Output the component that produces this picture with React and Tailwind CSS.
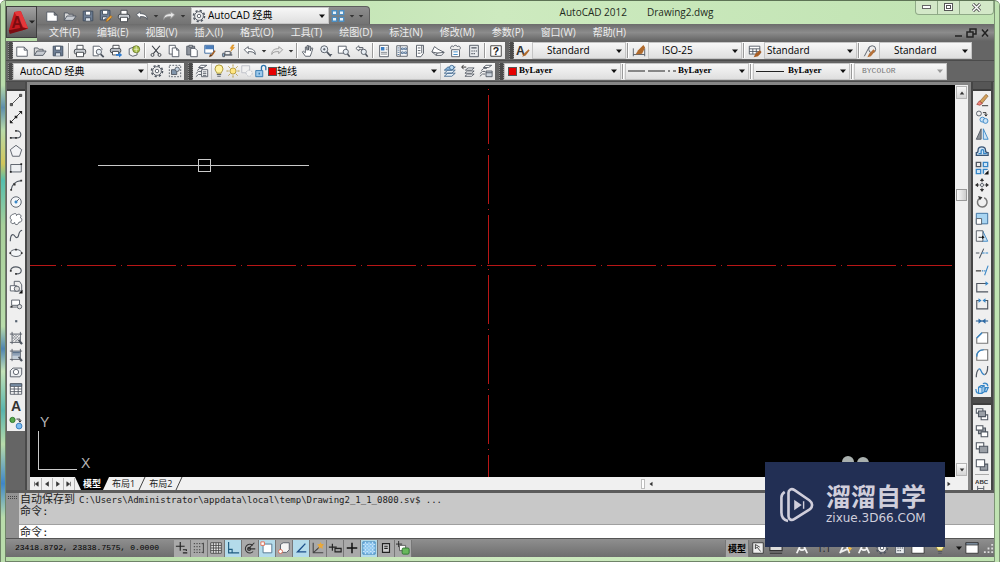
import React, { useState } from 'react';

const G = '#4f5660';
const B = '#3585c6';
const L = '#cfe4f5';

const icons = {
  blank: <path d="M2 3.5h8.5l3.5 3.5v7H2zM10.5 3.5V7H14" fill="#fff" stroke={G} />,
  open: (
    <g stroke={G}>
      <path d="M1.5 13V4.5h4l1 1.5h5v2" fill="#d9d9d9" />
      <path d="M1.5 13l3-5h10.500l-3.500 5z" fill="#c8ccd2" />
    </g>
  ),
  save: (
    <g stroke="#3d4a5c">
      <path d="M2.500 2.500h11v11h-11z" fill="#6f7f96" />
      <path d="M5 2.500h6v4.500H5z" fill="#fff" />
      <path d="M5 13.500V10h6v3.500" fill="#dde3ea" />
    </g>
  ),
  saveAs: (
    <g stroke="#3d4a5c">
      <path d="M1.500 1.500h11v11h-11z" fill="#6f7f96" />
      <path d="M4 1.500h6V6H4zM4 12.500V9h5" fill="#fff" />
      <path d="M8 14.500l1-3 4.500-4 1.500 1.500-4.500 4.500z" fill="#e9a43c" stroke="#a06010" strokeWidth=".6" />
    </g>
  ),
  print: (
    <g stroke="#3c4046">
      <path d="M4.500 6V1.500h7V6" fill="#fff" />
      <rect x="1.500" y="6" width="13" height="5.500" rx="2" fill="#c9cdd2" />
      <path d="M4 9.500h8v5H4z" fill="#fff" />
    </g>
  ),
  preview: (
    <g stroke={G}>
      <path d="M9 13.500H2.500v-11h7l3 3V7" fill="#fff" />
      <circle cx="9" cy="9" r="3" fill="#e8eef4" />
      <path d="M11 11.500l3.500 3.500" strokeWidth="2" />
    </g>
  ),
  publish: (
    <g stroke="#3c4046">
      <path d="M4.500 5V1.500h7V5" fill="#fff" />
      <rect x="1.500" y="5" width="12" height="5" rx="2" fill="#b8bdc4" />
      <path d="M4 8.500h7v4H4z" fill="#fff" />
      <path d="M8 11.500h3.500v-2L15 12.500l-3.500 3v-2H8z" fill="#2f7cd0" stroke="none" />
    </g>
  ),
  globe: (
    <g stroke={G}>
      <path d="M2.500 5.500l5-2 4 2v7l-5 1.500-4-2z" fill="#f2f2f2" />
      <circle cx="10.500" cy="6" r="4" fill="#a9c24a" stroke="#6a7a2a" />
      <path d="M8 6h5M10.500 2.500v7" stroke="#f5f5e0" strokeWidth=".8" />
    </g>
  ),
  cut: (
    <g stroke="#3a3f46">
      <path d="M3.500 2L11 11M12.500 2L5 11" strokeWidth="1.300" />
      <circle cx="4" cy="12.500" r="1.700" />
      <circle cx="12" cy="12.500" r="1.700" />
    </g>
  ),
  copyClip: (
    <g stroke={G} fill="#fff">
      <path d="M2.500 1.500h7v10h-7z" />
      <path d="M6 4.500h5l2.500 2.500v7.500H6zM11 4.500V7h2.500" />
    </g>
  ),
  paste: (
    <g stroke={G}>
      <path d="M2 2.500h9v10H2z" fill="#8d939c" />
      <path d="M4.500 1.500h4v2h-4z" fill="#ddd" />
      <path d="M6.500 5h5l2.500 2.500v7H6.500z" fill="#fff" />
    </g>
  ),
  match: (
    <g>
      <path d="M2 1.500h10v9H2z" fill="#fff" stroke="#2e5f99" />
      <path d="M2.500 2h9v4h-9z" fill="#4d80bd" />
      <path d="M9 12l4-5 1.500 1-3.500 5z" fill="#a3632b" />
      <path d="M7 15l1-3.500 3 2z" fill="#633512" />
    </g>
  ),
  block: (
    <g stroke={G}>
      <path d="M4.500 8.500h6v4h-6zM1 12.500h12" fill="#eee" />
      <path d="M11.500 13.500V9" />
      <path d="M13 1l-2.500 4h2L11 8.500 15.500 4H13l2-3z" fill="#f2a328" stroke="#c87c10" strokeWidth=".5" />
      <path d="M2 10.500h2v4H2z" fill="#9cbfe0" />
    </g>
  ),
  undo: <path d="M1.500 6.500L6 3v2.300c5 0 8 1.700 8 6.700-1-2.500-3.500-3.500-8-3.300V11z" fill="#fff" stroke={G} />,
  redo: <path d="M14.500 6.500L10 3v2.300c-5 0-8 1.700-8 6.700 1-2.500 3.500-3.500 8-3.300V11z" fill="#e6e6e6" stroke="#989898" />,
  hand: <path d="M5 14L1.500 9l1.300-.7L5 10V3.500l1.300-.3.700 4V1.700h1.500V7l1-4.700 1.300.3L10.500 8l1.700-3.700 1.300.6L12 10l-1.500 4z" fill="#fff" stroke={G} />,
  zoom: (
    <g stroke={G}>
      <circle cx="6" cy="6" r="4" fill="#e8eef4" />
      <path d="M9 9l4.500 5" strokeWidth="2" />
      <path d="M4.500 6h3M6 4.500v3M11 12h4" />
    </g>
  ),
  zoomWin: (
    <g stroke={G}>
      <path d="M1.500 2.500h9v8h-9z" fill="#fff" />
      <circle cx="10" cy="9" r="3" fill="#e8eef4" />
      <path d="M12 11.500l2.500 3" strokeWidth="1.800" />
    </g>
  ),
  zoomPrev: (
    <g stroke={G}>
      <path d="M1 5l3.500-3v2H9v2H4.500v2z" fill="#fff" />
      <circle cx="10" cy="9" r="3" fill="#e8eef4" />
      <path d="M12 11.500l2.500 3" strokeWidth="1.800" />
    </g>
  ),
  props: (
    <g stroke={G}>
      <path d="M3 1.500h10v13H3z" fill="#fff" />
      <path d="M4.500 3.500h4v4h-4z" fill="#3d7fc4" stroke="none" />
      <path d="M10 4.500h2M10 6.500h2M4.500 9.500h7M4.500 11.500h7" strokeWidth=".8" />
    </g>
  ),
  center: (
    <g stroke={G}>
      <path d="M2 2h12v12H2zM6 2v12" fill="#fff" />
      <path d="M3 4.500h2M3 7h2M3 9.500h2M3 12h2M7.500 4.500h2v2h-2zM11 4.500h2v2h-2zM7.500 9h2v2h-2zM11 9h2v2h-2z" stroke="#47688f" />
    </g>
  ),
  palette: (
    <g stroke={G}>
      <path d="M4 1.500h8v9l-3 4H4zM10 1.500v9" fill="#fff" />
      <path d="M5.500 4.500h3M5.500 7.500h3M5.500 10.500h3" />
    </g>
  ),
  sheet: (
    <g stroke={G}>
      <path d="M1 9l3-6 4 3 7 3.500-3 3.500H6z" fill="#fff" />
      <path d="M1 9l6 1.500 8-1M6 13l1-2.500" fill="#ccc" />
    </g>
  ),
  markup: (
    <g stroke={G}>
      <path d="M3 6.500h9v8H3z" fill="#fff" />
      <path d="M2 5.500c-1-3 2-4 3-2.500C6 1 9 1 9.500 3c2-1.500 4.500.5 3 3" fill="#eee" />
      <path d="M5 9h5M5 12h5" stroke={B} />
    </g>
  ),
  calc: (
    <g stroke={G}>
      <path d="M3 1.500h10v13H3z" fill="#e9ebee" />
      <path d="M5 4.500h6M5 8h1.500M7.500 8H9M10 8h1.500M5 11h1.500M7.500 11H9" strokeWidth="1.400" />
    </g>
  ),
  help: (
    <g>
      <path d="M2 2h12v12H2z" fill="#fff" stroke="#333" />
      <text x="8" y="12.500" textAnchor="middle" fontSize="12" fontWeight="700" fontFamily="Liberation Sans, sans-serif" fill="#222">?</text>
    </g>
  ),
  textStyle: (
    <g>
      <text x="0" y="12" fontSize="14" fontWeight="700" fontFamily="Liberation Sans, sans-serif" fill="#333">A</text>
      <path d="M7 14.500l2-3.500 5.500-5 1 1.500-4.500 5.500z" fill="#b06a2c" />
    </g>
  ),
  dimStyle: (
    <g>
      <path d="M1.500 5v9M14.500 5v9M1.500 12h13" stroke={G} />
      <path d="M4 12l3-5 6-6 2 3-3.500 7z" fill="#b06a2c" />
    </g>
  ),
  tableStyle: (
    <g>
      <path d="M1.500 2.500h12v9h-12zM1.500 5.500h12M5.500 5.500v6M9.500 5.500v6M1.500 8.500h12" fill="#fff" stroke={G} />
      <path d="M6.500 15l2-4 5-4 2 2-4 5z" fill="#a85e25" />
    </g>
  ),
  leaderStyle: (
    <g>
      <path d="M1.500 14L7 3.500h4" stroke={G} />
      <circle cx="10.500" cy="6" r="4" stroke={G} fill="#eee" />
      <path d="M5 15l2-4 5-5 2 2-5 6z" fill="#b5713a" />
    </g>
  ),
  gear: (
    <g stroke={G}>
      <circle cx="8" cy="8" r="5" fill="#eee" />
      <circle cx="8" cy="8" r="6.300" strokeWidth="1.800" strokeDasharray="2.500 2.450" />
      <circle cx="8" cy="8" r="2" fill="#fff" />
    </g>
  ),
  select: (
    <g stroke={G}>
      <path d="M1.500 1.500h13v13h-13z" strokeDasharray="2 1.500" />
      <path d="M4 6.500h6V12H4z" fill="#8195ab" />
      <circle cx="10.500" cy="6" r="2.500" fill="#c6d3e0" />
    </g>
  ),
  layers: (
    <g stroke={G}>
      <path d="M4 4l3-2.500h6.500L10 4zM2.500 7.500l3-2.500H9M1 11l3-2.500h3M1 14.500l3-2.500h3" fill="#fff" />
      <path d="M7.500 6.500h7v8h-7zM9 9h4M9 11h4M9 13h4" fill="#fff" />
    </g>
  ),
  bulb: (
    <g>
      <path d="M5.500 10.500c0-1.500-2-2.500-2-5a4.500 4.500 0 019 0c0 2.500-2 3.500-2 5z" fill="#fff3a0" stroke="#a08a28" />
      <path d="M5.500 12h5M6 14h4" stroke={G} />
    </g>
  ),
  sun: (
    <g stroke="#b09430">
      <circle cx="8" cy="8" r="3.500" fill="#ffe680" />
      <path d="M8 .5V3M8 13v2.500M.5 8H3M13 8h2.500M2.700 2.700l1.700 1.700M11.600 11.600l1.700 1.700M2.700 13.300l1.700-1.700M11.600 4.400l1.700-1.700" />
    </g>
  ),
  viewport: (
    <g stroke="#b9bdc3">
      <path d="M2 2h9v8H2z" fill="#f1f1f1" />
      <circle cx="10.500" cy="10.500" r="3.500" fill="#f3f3f3" strokeDasharray="2 1" />
    </g>
  ),
  lock: (
    <g stroke="#2d74ac">
      <path d="M2 7.500h8v7H2z" fill="#9cc9ec" />
      <path d="M8.500 7V4a2.500 2.500 0 015 0v3M6 10v2" strokeWidth="1.500" />
    </g>
  ),
  layerCur: (
    <g stroke="#42698f">
      <path d="M1.500 14l4-3.500H14L10 14zM1.500 10.500L5.500 7H14l-4 3.500z" fill="#e6f0f8" />
      <path d="M1.500 7l4-3.500H14L10 7z" fill="#86b4dc" />
      <circle cx="10" cy="4" r="2.500" fill="#bcdcf5" />
    </g>
  ),
  layerPrev: (
    <g stroke={G}>
      <path d="M4.500 14l3-2.500H15L12 14zM4.500 10.500l3-2.500H15l-3 2.500zM5 7l3-2.500h7L12 7z" fill="#fff" />
      <path d="M1 3.500h5M3 1L.8 3.500 3 6" stroke="#222" />
    </g>
  ),
  layerStates: (
    <g stroke={G}>
      <path d="M5 4l3-2.500h6.500L11 4zM2.500 7.500l3-2.500H9M1 11l3-2.500h3M1 14l3-2.500h3" fill="#fff" />
      <path d="M8 8h7v6.500H8zM8 10h7" fill="#cbd3dc" />
    </g>
  ),
  line: <g stroke="#444"><path d="M3 13L13 3" /><path d="M1.500 12h2.500v2.500H1.500zM12 1.500h2.500V4H12z" fill="#666" /></g>,
  xline: <g stroke="#222"><path d="M2 14L14 2" /><path d="M1 15v-4l4 4zM15 1v4l-4-4zM6.500 6.500h3v3h-3z" fill="#222" stroke="none" /></g>,
  pline: <g stroke={G} strokeWidth="1.300"><path d="M2 12.500h7c6 0 6-8 0-8" /><path d="M1 11.500h2v2H1zM7 11.500h2v2H7zM7 3.500h2v2H7z" fill="#333" stroke="none" /></g>,
  polygon: <path d="M8 1.500l6.500 5L12 14H4L1.500 6.500z" fill="#f2f3f5" stroke={G} />,
  rect: <g stroke={G}><path d="M2 4h12v8.500H2z" fill="#eef0f2" /><path d="M1 11.500h2v2H1zM13 2.500h2v2h-2z" fill="#222" stroke="none" /></g>,
  arc: <g stroke={G} strokeWidth="1.300"><path d="M2.500 13.500C3 8 7 3.500 14 3" /><path d="M1.500 12.500h2v2h-2zM5 6h2.500v2.500H5zM13 2h2v2h-2z" fill="#333" stroke="none" /></g>,
  circle: <g stroke={G}><circle cx="8" cy="8" r="6" fill="#f4f6f8" /><path d="M8 8l3.500-3.500" /><circle cx="8" cy="8" r="1.300" fill={B} stroke={B} /></g>,
  cloud: <path d="M5 2.500c2-1.500 4-.5 3.500 1.500 2-3 7-1 4.500 2.500 3 1 1.500 6-1.500 5-1 4-5.500 3.500-5 .5-2.500 3-6 0-3.500-3-3-1.500-1.500-6 2-6.500z" fill="#fff" stroke={G} />,
  spline: <path d="M1.500 14c0-8 3-9 5-6s4 2 4.500-1S12.500 2 15 1.500" stroke={G} strokeWidth="1.300" />,
  ellipse: <g stroke={G}><ellipse cx="8" cy="8" rx="6.500" ry="4" fill="#f4f6f8" /><path d="M7 3h2v2H7zM.5 7h2v2h-2zM13.500 7h2v2h-2z" fill="#333" stroke="none" /></g>,
  ellArc: <g stroke={G} strokeWidth="1.300"><path d="M2 9c-1-6 12-6 12-.5 0 3-3 4-5.500 4" /><path d="M7 11.500h2v2H7zM1 8h2v2H1z" fill="#333" stroke="none" /></g>,
  insert: <g stroke={G}><path d="M6 1.500h6l2.500 4v7H6z" fill="#eee" /><path d="M1.500 6.500h7v6h-7z" fill="#fff" /><circle cx="9" cy="10" r="3" fill="#ddd" /><path d="M15.500 11v4.500H11z" fill="#111" stroke="none" /></g>,
  mkBlock: <g stroke={G}><path d="M3 3.500h9v6H3zM1 11.500h8" fill="#fff" /><circle cx="12" cy="11" r="2.500" fill="#ddd" /><path d="M2 10h2v2H2z" fill="#333" stroke="none" /></g>,
  point: <path d="M7 7h2.500v2.500H7z" fill="#556270" />,
  hatch: <g stroke={G}><path d="M3.500 1v14M13 1v14M1 3.500h14M1 13h14" /><path d="M4 12l8-8M4 9l5-5M7 12.500L12.500 7M4 6l2-2M4 4l8 8.500M7 4l6 6M4 7l5 5" strokeWidth=".5" /><path d="M11 10l4 5" strokeWidth="2" /></g>,
  gradient: <g stroke={G}><path d="M3.500 1v14M13 1v14M1 3.500h14M1 13h14" /><path d="M4 4h8.500v2.500H4z" fill="#5d738d" stroke="none" /><path d="M4 6.500h8.500V9H4z" fill="#8fa2b8" stroke="none" /><path d="M4 9h8.500v3.500H4z" fill="#c3ced9" stroke="none" /><path d="M11 10l4 5" strokeWidth="2" /></g>,
  region: <g stroke={G}><path d="M1.500 13.500v-7l3-3h10v7l-2 3z" fill="#eceef0" /><circle cx="8" cy="8" r="3" fill="#fff" /></g>,
  table: <g stroke={G}><path d="M1.500 2h13v12h-13zM1.500 8h13M1.500 11h13M6 5v9M10.500 5v9" fill="#fff" /><path d="M1.500 2h13v3h-13z" fill="#7c93ac" /></g>,
  mtext: <text x="8" y="14" textAnchor="middle" fontSize="16" fontWeight="700" fontFamily="Liberation Sans, sans-serif" fill="#333">A</text>,
  addSel: <g><circle cx="4" cy="4.500" r="3" fill="#58a84c" stroke="#2c7028" /><circle cx="11.500" cy="11.500" r="3.300" fill="#7fbdf0" stroke="#2f75b8" /><path d="M8.500 3.500h4V6M11 5l1.500 2L14 5" stroke="#222" /></g>,
  erase: <g><path d="M5 10l7.500-8.500 2.500 2L8 12z" fill="#d3a05a" stroke="#80572a" strokeWidth=".7" /><path d="M2 13l3-4 3.500 3-3 2z" fill="#f0837a" stroke="#8a3028" strokeWidth=".7" /><path d="M8 14.500h7" stroke="#222" /></g>,
  copyObj: <g><circle cx="4.500" cy="4" r="2.800" stroke={G} fill="#eee" /><circle cx="8.500" cy="11" r="2.800" stroke={B} fill={L} /><circle cx="12" cy="12.500" r="2.800" stroke={B} fill={L} /><path d="M9 3h3.500v3.500M11 5l1.500 2L14 5" stroke="#222" /></g>,
  mirror: <g><path d="M7 2v12H1.500z" fill="#8b9096" stroke={G} /><path d="M9.500 2v12H15z" fill={L} stroke={B} /></g>,
  offset: <g><path d="M1.500 13V10c2 0 2-1 2-3 0-5 8.500-5 8.500 0 0 2 1 3 3 3v3z" stroke="#3a5575" strokeWidth="1.500" fill={L} /><path d="M4 11h3V8c0-2 3-2 3 0v3h3.500" stroke={B} strokeWidth="1.500" fill={L} /></g>,
  array: <g strokeWidth="1.500"><path d="M1.500 1.500h5v5h-5z" stroke={G} fill="#eee" /><path d="M9.500 1.500h5v5h-5zM1.500 9.500h5v5h-5zM9.500 14.500v-5h5" stroke={B} fill={L} /><path d="M15.500 10.500v5h-5z" fill="#111" /></g>,
  move: <g><circle cx="8" cy="8" r="1.800" stroke={G} /><path d="M8 0l2.500 3.500h-5zM8 16l-2.500-3.500h5zM0 8l3.500-2.500v5zM16 8l-3.500 2.500v-5z" fill="#333" /><path d="M8 3v2M8 11v2M3 8h2M11 8h2" stroke="#333" /></g>,
  rotate: <g stroke="#777" strokeWidth="1.700"><path d="M5.500 3.500a5.500 5.500 0 105-.3" /><path d="M3.500 1l5 1.500-3 3.500z" fill="#333" stroke="none" /></g>,
  scale: <g><path d="M1.500 1.500h13v12h-13z" fill="#a9d5f2" stroke="#35699a" /><path d="M1.500 7.500h6v6.500h-6z" fill="#fff" stroke={G} /></g>,
  stretch: <g><path d="M9 2.500l5.500 11.500H8z" fill={L} stroke={B} /><path d="M1.500 2H9v12H1.500z" fill="#f6f6f6" stroke={G} /><path d="M4 9.500h4" stroke="#111" /><path d="M8 7.500l3 2-3 2z" fill="#111" /></g>,
  trim: <g stroke={G} strokeWidth="1.200"><path d="M1 8h4M5 14L10 3" /><path d="M8 8h7" stroke={B} strokeDasharray="3 1" /></g>,
  extend: <g stroke={G} strokeWidth="1.200"><path d="M1 9h6" stroke="#222" /><path d="M8 9h4" stroke={B} strokeDasharray="1.500 1" /><path d="M11 14l4-11" stroke={B} /></g>,
  breakPt: <g stroke={G} strokeWidth="1.300"><path d="M13 4H2v9.500h13" /><path d="M12 1.500L15.500 4 12 6.500z" fill={B} stroke="none" /></g>,
  breakObj: <g stroke={G} strokeWidth="1.300"><path d="M5 4H2v9.500h12.500V4H11" fill="#eee" /><path d="M4 1.500L7.500 4 4 6.500zM12 1.500L8.500 4 12 6.500z" fill={B} stroke="none" /></g>,
  join: <g stroke="#35699a" strokeWidth="1.300"><path d="M1 8h14" /><path d="M4 5l4 3-4 3zM12 5L8 8l4 3z" fill="#2d6aa5" stroke="none" /></g>,
  chamfer: <g><path d="M2 14V8l6-6h6.500v12z" fill="#fff" stroke="#777" strokeWidth="1.300" /><path d="M2 8l6-6" stroke={B} strokeWidth="1.400" /></g>,
  fillet: <g><path d="M2 14v-4c0-5 3-8 8-8h4.500v12z" fill="#fff" stroke="#777" strokeWidth="1.300" /><path d="M2 10c0-5 3-8 8-8" stroke={B} strokeWidth="1.400" /></g>,
  blend: <g strokeWidth="1.400"><path d="M1.500 14c0-3 .5-7 2.500-9M11 11c3-1 3.500-5 3.500-10" stroke={G} /><path d="M4 5c3-3 3 7 7 6" stroke={B} /></g>,
  explode: <g stroke={B} fill={L}><path d="M4 6l3-2h3.500v7L8 13H4zM4 6h4v7M8 6l2.500-2" strokeWidth="1.200" /><path d="M1 8c0 2 .5 4 2 5M9 2c3-1.500 6 0 5.500 3M12 6.500h3l-2 4.500h-2z" strokeWidth="1.400" /></g>,
  front: <g stroke={G} strokeWidth="1.200"><path d="M1.500 2H9v5H1.500zM7 9h7.500v5.500H7z" fill="#fff" /><path d="M4 4.500h8v6.500H4z" fill="#9a9fa6" /></g>,
  back: <g stroke={G} strokeWidth="1.200"><path d="M4 4.500h8v6.500H4z" fill="#9a9fa6" /><path d="M1.500 2H9v5H1.500zM7 9h7.500v5.500H7z" fill="#fff" /></g>,
  above: <g stroke={G} strokeWidth="1.200"><path d="M1.500 2H10v7H1.500z" fill="#fff" /><path d="M5 6h9.500v7.500H5z" fill="#9a9fa6" /></g>,
  under: <g stroke={G} strokeWidth="1.200"><path d="M6 7h8.500v7H6z" fill="#9a9fa6" /><path d="M1.500 2H11v8H1.500z" fill="#fff" /></g>,
  annot: <g><text x="0" y="7" fontSize="7" fontWeight="700" fontFamily="Liberation Sans, sans-serif" fill="#333">ABC</text><path d="M3 9v6M10 9v6M3 12h7" stroke={G} /></g>,
  infer: <g stroke="#222" strokeWidth="1.300"><path d="M6 1v10M1 6h10M9 10h4M9 13.500h5M13 9.500v2" /></g>,
  snap: <g stroke="#333"><path d="M2 3h11M2 6.500h8M2 10h8M2 13h11" strokeDasharray="1.500 1.500" /><path d="M13 2v12" /></g>,
  grid: <g stroke="#444"><path d="M2 2h12v12H2zM5 2v12M8 2v12M11 2v12M2 5h12M2 8h12M2 11h12" fill="#eee" /></g>,
  ortho: <path d="M3 1v12.500h12M3 9.500h4v4" stroke="#1f5c80" strokeWidth="1.300" />,
  polar: <g stroke="#333" strokeWidth="1.200"><path d="M13 2L6 9h8" /><path d="M11 5a5 5 0 10.5 7" /><circle cx="7" cy="9" r="1.700" /></g>,
  osnap: <g><path d="M3.500 3.500h10v10h-10z" fill="#fff" stroke="#4a6f8a" /><path d="M1 1h4v4H1z" fill="#fff" stroke="#e0684a" /></g>,
  osnap3d: <g><path d="M4 4l3-2h7v8l-3 3H4z" fill="#f4f4f4" stroke={G} /><circle cx="4" cy="12" r="2.300" fill="#fff" stroke="#d8644a" /></g>,
  otrack: <path d="M13 3L4 12.500h10" stroke="#1b4f8a" strokeWidth="1.500" />,
  ducs: <g><path d="M2.500 2v11.500H14M3 13L13 4" stroke="#444" strokeWidth="1.200" /><path d="M11 1l1 2.500 3 .5-2 2 .5 3-2.500-1.500L8.500 9 9 6 7 4l3-.5z" fill="#eba838" /></g>,
  dyn: <g stroke="#222" strokeWidth="1.300"><path d="M5 3v8M1 7h9" /><path d="M8 8.500h7v4H8z" fill="#999" /></g>,
  lwt: <path d="M8 2v12M2 8h12" stroke="#111" strokeWidth="1.700" />,
  tpy: <g><path d="M1 1h14v14H1z" fill="#8fc7ef" stroke="#3a81b8" /><path d="M1 4h14M1 8h14M1 12h14M4 1v14M8 1v14M12 1v14" stroke="#d5ecfb" strokeDasharray="2 2" /></g>,
  qp: <g stroke="#222" strokeWidth="1.300"><path d="M4 3h8v10H4z" fill="#ccc" /><path d="M6 6h4M6 8.500h4" /></g>,
  cycle: <g><path d="M3 0v7M0 3.500h7" stroke="#222" /><path d="M4 5h7v6H4z" fill="#fff" stroke="#555" /><rect x="7" y="8" width="8" height="7" rx="1.500" fill="#68b85c" stroke="#2d7030" /></g>,
  layout: <g stroke="#333"><path d="M2 2h12v12H2z" fill="#eee" /><path d="M5 4v5l2-2 4 5M5 4l5 3" /></g>,
  quickLayout: <g stroke="#333" strokeWidth="1.300"><path d="M1 4h14v7H1zM1 14h14" fill="#ddd" /></g>,
  compass: <path d="M8 1L2 14M8 1l6 13M5 9c2 2 4 2 6 0" stroke="#f2f2f2" strokeWidth="2" />,
  annoVis: <g><path d="M7 1L1 14M7 1l5 13M1 13l9-4" stroke="#eee" strokeWidth="2" /><path d="M12 5l-2 4h2l-1 4 4-5h-2l1-3z" fill="#f0b840" /></g>,
  winIcon: <g stroke="#333"><path d="M1 2h14v12H1z" fill="#fff" /><path d="M1 2h14v2.500H1z" fill="#8a9fb5" /></g>,
  four: <g fill="#e8f3fb" stroke="#4b8fc4" strokeWidth="1.500"><path d="M1.500 2h5v4.500h-5zM9.500 2h5v4.500h-5zM1.500 9.500h5V14h-5zM9.500 9.500h5V14h-5z" /></g>,
};

const Icon = ({ name }) => (
  <svg viewBox="0 0 16 16" className="h-[14px] w-[14px] shrink-0" fill="none" aria-hidden="true">
    {icons[name]}
  </svg>
);

const Tool = ({ name }) => (
  <button type="button" aria-label={name} className="flex h-[17px] w-[18px] shrink-0 items-center justify-center hover:bg-sky-200">
    <Icon name={name} />
  </button>
);

const Caret = ({ dark = true }) => (
  <svg viewBox="0 0 8 8" className="h-2 w-2 shrink-0" aria-hidden="true">
    <path d="M1 2.500h6L4 6z" fill={dark ? '#111' : '#999'} />
  </svg>
);

const SmallCaret = () => (
  <button type="button" aria-label="more" className="flex h-[17px] w-[9px] shrink-0 items-center justify-center">
    <svg viewBox="0 0 8 8" className="h-[6px] w-[6px]" aria-hidden="true">
      <path d="M1 2.500h6L4 6z" fill="#333" />
    </svg>
  </button>
);

const Sep = () => <span className="mx-px h-[15px] w-[2px] shrink-0 border-l border-[#9a9a9a] bg-white" />;

const Grip = () => <span className="h-[17px] w-[5px] shrink-0 border-x border-dotted border-[#8c8c8c] bg-[#4a4a4a]" />;

const Strip = ({ children }) => (
  <div className="flex h-[17px] shrink-0 items-center bg-linear-to-b from-[#f6f6f6] to-[#e4e4e4]">{children}</div>
);

const Combo = ({ label, options, width, textClass, disabled, children }) => {
  const [value, setValue] = useState(options[0]);
  return (
    <div className={`relative flex h-[17px] shrink-0 items-center border border-[#c4c4c4] bg-linear-to-b from-[#f7f7f7] to-[#dfdfdf] ${width}`}>
      {children}
      <select
        aria-label={label}
        value={value}
        disabled={disabled}
        onChange={(e) => setValue(e.target.value)}
        className={`h-full w-full appearance-none bg-transparent outline-none ${textClass}`}
      >
        {options.map((o) => (
          <option key={o}>{o}</option>
        ))}
      </select>
      <span className="pointer-events-none absolute right-[2px] flex">
        <Caret dark={!disabled} />
      </span>
    </div>
  );
};

const menus = ['文件(F)', '编辑(E)', '视图(V)', '插入(I)', '格式(O)', '工具(T)', '绘图(D)', '标注(N)', '修改(M)', '参数(P)', '窗口(W)', '帮助(H)'];

const drawTools = ['line', 'xline', 'pline', 'polygon', 'rect', 'arc', 'circle', 'cloud', 'spline', 'ellipse', 'ellArc', 'insert', 'mkBlock', 'point', 'hatch', 'gradient', 'region', 'table', 'mtext', 'addSel'];

const modifyTools = ['erase', 'copyObj', 'mirror', 'offset', 'array', 'move', 'rotate', 'scale', 'stretch', 'trim', 'extend', 'breakPt', 'breakObj', 'join', 'chamfer', 'fillet', 'blend', 'explode'];

const statusToggles = [
  ['infer', false],
  ['snap', false],
  ['grid', false],
  ['ortho', true],
  ['polar', false],
  ['osnap', true],
  ['osnap3d', false],
  ['otrack', true],
  ['ducs', false],
  ['dyn', false],
  ['lwt', false],
  ['tpy', true],
  ['qp', false],
  ['cycle', false],
];

const Header = () => (
  <header className="flex h-[41px] shrink-0">
    <button type="button" aria-label="application" className="mt-[6px] flex h-[32px] w-[31px] shrink-0 items-center border border-[#3e3e3e] bg-linear-to-b from-[#a2a2a2] to-[#5a5a5a]">
      <svg viewBox="0 0 24 28" className="h-7 w-[22px]" aria-hidden="true">
        <path d="M2 23L8 3l7-1 8 19-6 2-14 3z" fill="#c4191f" />
        <path d="M8 3l7-1 8 19-5-1z" fill="#e5383b" />
        <path d="M2 23l15-3 6 1-6 2-14 4z" fill="#7c0b10" />
        <text x="11" y="21" textAnchor="middle" fontSize="17" fontWeight="700" fontFamily="Liberation Sans, sans-serif" fill="#7c0b10">A</text>
      </svg>
      <svg viewBox="0 0 8 8" className="h-[6px] w-[6px]" aria-hidden="true">
        <path d="M0 2h8L4 6z" fill="#222" />
      </svg>
    </button>
    <div className="flex min-w-0 grow flex-col">
      <div className="flex h-6">
        <div className="flex h-[18px] shrink-0 items-center self-end rounded-tr-sm border-t border-r border-[#5e5e5e] bg-linear-to-b from-[#8e8e8e] to-[#737373] pl-[6px] pr-1">
          <Tool name="blank" />
          <Tool name="open" />
          <Tool name="save" />
          <Tool name="saveAs" />
          <Tool name="print" />
          <Tool name="undo" />
          <SmallCaret />
          <Tool name="redo" />
          <SmallCaret />
          <span className="w-1" />
          <Combo label="workspace" options={['AutoCAD 经典']} width="w-[138px]" textClass="pl-[2px] text-[10px]">
            <Icon name="gear" />
          </Combo>
          <Tool name="four" />
          <SmallCaret />
          <SmallCaret />
        </div>
        <h1 className="flex grow items-center justify-center gap-5 pr-3 text-[10px] text-[#1e2a1c]">
          <span>AutoCAD 2012</span>
          <span>Drawing2.dwg</span>
        </h1>
        <div className="flex h-[15px] shrink-0 divide-x divide-[#8fa987] rounded-b border border-t-0 border-[#8fa987] bg-[#d3e8c8]">
          <button type="button" aria-label="minimize" className="flex w-[22px] items-center justify-center">
            <span className="h-[4px] w-[9px] border border-[#666] bg-white" />
          </button>
          <button type="button" aria-label="maximize" className="flex w-[22px] items-center justify-center">
            <span className="flex h-[8px] w-[9px] items-center justify-center border border-[#555] bg-white">
              <span className="h-[4px] w-[5px] border border-[#555]" />
            </span>
          </button>
          <button type="button" aria-label="close" className="flex w-[33px] items-center justify-center">
            <svg viewBox="0 0 10 10" className="h-[9px] w-[9px]" aria-hidden="true">
              <path d="M1 1l8 8M9 1L1 9" stroke="#555" strokeWidth="3.500" />
              <path d="M1 1l8 8M9 1L1 9" stroke="#fff" strokeWidth="1.500" />
            </svg>
          </button>
        </div>
      </div>
      <nav className="flex h-[17px] items-center gap-[17px] bg-linear-to-b from-[#6c6c6c] via-[#8c8c8c] to-[#656565] pl-3 pr-1 text-[10px] text-[#ededed]">
        {menus.map((m) => (
          <button key={m} type="button" className="shrink-0 leading-[17px]">
            {m}
          </button>
        ))}
        <span className="grow" />
        <svg viewBox="0 0 36 10" className="h-[10px] w-9" fill="none" stroke="#222" strokeWidth="1.500" aria-hidden="true">
          <path d="M1 8h7M13 4h6v5h-6zM16 4V1h6v5h-3M28 1.500l6 7M34 1.500l-6 7" />
        </svg>
      </nav>
    </div>
  </header>
);

const serif = "font-['Liberation_Serif',serif] text-[9px] font-bold";

const Toolbars = () => (
  <div className="shrink-0 bg-[#656565]">
    <div className="flex h-5 items-center border-b border-[#4b4b4b] pl-[2px]">
      <Grip />
      <Strip>
        <Tool name="blank" />
        <Tool name="open" />
        <Tool name="save" />
        <Sep />
        <Tool name="print" />
        <Tool name="preview" />
        <Tool name="publish" />
        <Tool name="globe" />
        <Sep />
        <Tool name="cut" />
        <Tool name="copyClip" />
        <Tool name="paste" />
        <Tool name="match" />
        <Tool name="block" />
        <Sep />
        <Tool name="undo" />
        <SmallCaret />
        <Tool name="redo" />
        <SmallCaret />
        <Sep />
        <Tool name="hand" />
        <Tool name="zoom" />
        <Tool name="zoomWin" />
        <Tool name="zoomPrev" />
        <Sep />
        <Tool name="props" />
        <Tool name="center" />
        <Tool name="palette" />
        <Tool name="sheet" />
        <Tool name="markup" />
        <Tool name="calc" />
        <Sep />
        <Tool name="help" />
      </Strip>
      <span className="w-[4px]" />
      <Grip />
      <Strip>
        <Tool name="textStyle" />
        <Combo label="text style" options={['Standard']} width="w-[94px]" textClass="pl-[14px] text-[10px]" />
        <Sep />
        <Tool name="dimStyle" />
        <Combo label="dimension style" options={['ISO-25']} width="w-[94px]" textClass="pl-[13px] text-[10px]" />
        <Sep />
        <Tool name="tableStyle" />
        <Combo label="table style" options={['Standard']} width="w-[93px]" textClass="pl-[2px] text-[10px]" />
        <Sep />
        <Tool name="leaderStyle" />
        <Combo label="leader style" options={['Standard']} width="w-[93px]" textClass="pl-[14px] text-[10px]" />
      </Strip>
    </div>
    <div className="flex h-[21px] items-center border-b border-[#4b4b4b] pl-[2px]">
      <Grip />
      <Strip>
        <Combo label="workspace" options={['AutoCAD 经典']} width="w-[135px]" textClass="pl-[6px] text-[10px]" />
        <Tool name="gear" />
        <Tool name="select" />
      </Strip>
      <span className="w-[4px]" />
      <Grip />
      <Strip>
        <Tool name="layers" />
        <Combo label="layer" options={['轴线']} width="w-[230px]" textClass="text-[10px]">
          <div className="flex shrink-0 items-center">
            <Icon name="bulb" />
            <Icon name="sun" />
            <Icon name="viewport" />
            <Icon name="lock" />
            <span className="h-[9px] w-[9px] border border-[#555] bg-[#e60000]" />
          </div>
        </Combo>
        <Tool name="layerCur" />
        <Tool name="layerPrev" />
        <Tool name="layerStates" />
      </Strip>
      <span className="w-[4px]" />
      <Grip />
      <Strip>
        <Combo label="color" options={['ByLayer']} width="w-[117px]" textClass={`pl-[2px] ${serif}`}>
          <span className="ml-[3px] h-[9px] w-[9px] shrink-0 border border-[#555] bg-[#e60000]" />
        </Combo>
        <Sep />
        <Combo label="linetype" options={['ByLayer']} width="w-[124px]" textClass={`pl-[2px] ${serif}`}>
          <svg viewBox="0 0 48 2" className="ml-[2px] h-[2px] w-12 shrink-0" aria-hidden="true">
            <path d="M0 1h48" stroke="#222" strokeDasharray="17 3 17 3 2 3" />
          </svg>
        </Combo>
        <Sep />
        <Combo label="lineweight" options={['ByLayer']} width="w-[97px]" textClass={`pl-[4px] ${serif}`}>
          <span className="ml-[2px] h-px w-7 shrink-0 bg-[#222]" />
        </Combo>
        <Sep />
        <Combo
          label="plot style"
          options={['BYCOLOR']}
          width="w-[93px]"
          disabled
          textClass="pl-[7px] font-['Liberation_Mono',monospace] text-[8px] text-[#777]"
        />
      </Strip>
    </div>
  </div>
);

const SideBar = ({ tools, children }) => (
  <aside className="flex w-[18px] shrink-0 flex-col overflow-hidden">
    <div className="h-[9px] shrink-0 border-b-2 border-[#3e3e3e] bg-[#565656]" />
    <div className="flex flex-col bg-[#efefef]">
      {tools.map((t) => (
        <Tool key={t} name={t} />
      ))}
    </div>
    {children}
  </aside>
);

const Canvas = () => (
  <svg className="h-full min-w-0 grow bg-black" shapeRendering="crispEdges" aria-label="drawing">
    <g stroke="#b81616" strokeDasharray="49 5 1 5">
      <path d="M-23 180.500H922" />
      <path d="M458.500 -50V1000" />
    </g>
    <path d="M68 80.500h211M168.500 74.500h12v12h-12z" stroke="#c9c9c9" fill="none" />
    <svg y="100%" overflow="visible">
      <path d="M8.500 -46V-7.500H47" stroke="#c9c9c9" fill="none" />
      <g fill="#b5b5b5" fontSize="14" fontFamily="Liberation Sans, sans-serif">
        <text x="10" y="-50">Y</text>
        <text x="51" y="-9">X</text>
      </g>
    </svg>
  </svg>
);

const ScrollButton = ({ label, d }) => (
  <button type="button" aria-label={label} className="flex h-[13px] w-[11px] shrink-0 items-center justify-center border border-[#b5b5b5] bg-linear-to-b from-[#fafafa] to-[#d4d4d4]">
    <svg viewBox="0 0 8 8" className="h-[6px] w-[6px]" aria-hidden="true">
      <path d={d} fill="#333" />
    </svg>
  </button>
);

const Slash = () => (
  <svg viewBox="0 0 8 13" className="h-[13px] w-2 shrink-0" aria-hidden="true">
    <path d="M1 13L7 0" stroke="#444" />
  </svg>
);

const SheetTabs = () => (
  <div className="flex h-[13px] shrink-0 items-center bg-[#f0f0f0] pl-px text-[9px] leading-[13px] text-[#222]">
    {['M2 1v6M7 1L3 4l4 3z', 'M6 1L2 4l4 3z', 'M2 1l4 3-4 3z', 'M6 1v6M1 1l4 3-4 3z'].map((d) => (
      <button key={d} type="button" aria-label="sheet" className="flex h-[12px] w-[11px] items-center justify-center border-r border-[#b5b5b5]">
        <svg viewBox="0 0 8 8" className="h-[6px] w-[6px]" aria-hidden="true">
          <path d={d} fill="#333" stroke="#333" strokeWidth=".8" />
        </svg>
      </button>
    ))}
    <button type="button" className="relative h-[13px] w-[34px] font-bold text-white">
      <svg viewBox="0 0 34 13" className="absolute inset-0 h-[13px] w-[34px]" aria-hidden="true">
        <path d="M0 0h34l-6 13H6z" fill="#000" />
      </svg>
      <span className="relative">模型</span>
    </button>
    <button type="button" className="px-[3px]">布局1</button>
    <Slash />
    <button type="button" className="px-[3px]">布局2</button>
    <Slash />
    <span className="grow" />
    <div className="flex w-[327px] shrink-0 items-center">
      <span className="h-[10px] w-[4px] border border-[#bdbdbd] bg-white" />
      <svg viewBox="0 0 8 8" className="ml-[3px] h-[6px] w-[6px]" aria-hidden="true">
        <path d="M6 1L2 4l4 3z" fill="#333" />
      </svg>
      <span className="grow" />
      <svg viewBox="0 0 8 8" className="mr-4 h-[6px] w-[6px]" aria-hidden="true">
        <path d="M2 1l4 3-4 3z" fill="#333" />
      </svg>
    </div>
  </div>
);

const Workspace = () => (
  <main className="flex min-h-0 grow bg-[#656565] px-px">
    <SideBar tools={drawTools} />
    <div className="flex min-w-0 grow flex-col border-l-2 border-[#4a4a4a]">
      <div className="flex min-h-0 grow flex-col border-x-3 border-t-3 border-[#868686]">
        <div className="flex min-h-0 grow">
          <Canvas />
          <div className="flex w-[13px] shrink-0 flex-col items-center bg-[#f0f0f0] py-px">
            <ScrollButton label="up" d="M1 6l3-4 3 4z" />
            <span className="h-[90px]" />
            <span className="h-3 w-[11px] border border-[#999] bg-linear-to-r from-[#fafafa] to-[#cdcdcd]" />
            <span className="grow" />
            <ScrollButton label="down" d="M1 2l3 4 3-4z" />
          </div>
        </div>
        <SheetTabs />
      </div>
    </div>
    <div className="flex shrink-0 border-x-2 border-[#454545]">
      <SideBar tools={modifyTools}>
        <div className="h-2 shrink-0 border-b-2 border-[#3e3e3e] bg-[#4c4c4c]" />
        <div className="flex flex-col bg-[#efefef]">
          <Tool name="front" />
          <Tool name="back" />
          <Tool name="above" />
          <Tool name="under" />
          <span className="mx-[2px] my-px h-px bg-[#aaa]" />
          <Tool name="annot" />
        </div>
      </SideBar>
    </div>
  </main>
);

const CommandWindow = () => (
  <section className="flex h-12 shrink-0 border-t-3 border-[#5c5c5c] font-['DejaVu_Sans_Mono','Noto_Sans_CJK_SC',monospace] text-[9px] text-[#1c1c1c]">
    <div className="w-[13px] shrink-0 bg-[#929292] pt-[3px]">
      <div className="mx-[2px] h-[3px] border-y border-dotted border-[#444]" />
    </div>
    <div className="flex min-w-0 grow flex-col">
      <div className="h-8 shrink-0 border-b border-[#a0a0a0] bg-[#c8c8c8] pl-px leading-[12px]">
        <p className="flex gap-1 whitespace-nowrap pt-px">
          <span className="text-[11px]">自动保存到</span>
          <span>C:\Users\Administrator\appdata\local\temp\Drawing2_1_1_0800.sv$ ...</span>
        </p>
        <p className="text-[11px]">命令:</p>
      </div>
      <label className="flex h-[13px] items-end bg-white pl-px text-[11px] leading-[11px]">
        命令:
        <input type="text" className="h-[11px] min-w-0 grow bg-transparent outline-none" />
      </label>
    </div>
  </section>
);

const StatusBar = () => (
  <footer className="flex h-[19px] shrink-0 items-center border-t border-[#555] bg-linear-to-b from-[#8f8f8f] to-[#6e6e6e]">
    <output className="w-[168px] shrink-0 pl-[9px] font-['Liberation_Mono',monospace] text-[8px] whitespace-nowrap text-black">
      23418.8792, 23838.7575, 0.0000
    </output>
    {statusToggles.map(([name, on]) => (
      <button
        key={name}
        type="button"
        aria-label={name}
        aria-pressed={on}
        className={`flex h-[17px] w-[17px] shrink-0 items-center justify-center border-r border-[#777] ${on ? 'bg-[#b4dbea]' : 'bg-[#a9a9a9]'}`}
      >
        <Icon name={name} />
      </button>
    ))}
    <span className="grow" />
    <button type="button" className="h-[17px] w-6 shrink-0 border-x border-[#777] bg-[#a6a6a6] text-[9px] leading-[17px] font-bold">
      模型
    </button>
    <Tool name="layout" />
    <Tool name="quickLayout" />
    <span className="w-2" />
    <Tool name="compass" />
    <span className="w-[26px] text-center text-[10px] text-[#222]">1:1</span>
    <Tool name="annoVis" />
    <Tool name="compass" />
    <Tool name="gear" />
    <Tool name="calc" />
    <Tool name="winIcon" />
    <span className="w-1" />
    <Tool name="bulb" />
    <span className="ml-[6px] flex"><Caret /></span>
    <Tool name="winIcon" />
    <svg viewBox="0 0 12 12" className="ml-[2px] h-[11px] w-[11px]" fill="#ddd" aria-hidden="true">
      <path d="M9 1h2v2H9zM9 5h2v2H9zM9 9h2v2H9zM5 5h2v2H5zM5 9h2v2H5zM1 9h2v2H1z" />
    </svg>
  </footer>
);

const Watermark = () => (
  <div className="absolute right-[55px] bottom-[15px]">
    <div className="absolute -top-[6px] left-[77px] flex gap-[3px]">
      <span className="h-3 w-3 rounded-full bg-[#a9b0ae]" />
      <span className="mt-px h-3 w-3 rounded-full bg-[#a9b0ae]" />
    </div>
    <div className="relative flex h-[85px] w-[180px] items-center gap-[12px] bg-[#222f54] pl-[15px] text-[#d0cedb]">
      <svg viewBox="0 0 36 38" className="h-9 w-[34px] shrink-0" fill="none" stroke="currentColor" strokeWidth="2.800" aria-hidden="true">
        <path d="M9 6c0-3 3-5 6-3l16 11c4 3 4 7 0 10L15 34c-3 2-6 0-6-3z" />
        <path d="M5 5c-3 2-3.500 3-3.500 6v16c0 4 2 8 7 9" />
        <path d="M15 13.500l8 5.500-8 5.500z" fill="currentColor" stroke="none" />
        <path d="M25 15v8" strokeWidth="1.500" />
      </svg>
      <div>
        <p className="text-[25px] leading-[30px] font-bold">溜溜自学</p>
        <p className="pb-1 font-['DejaVu_Sans',sans-serif] text-[12px] leading-[14px]">zixue.3D66.COM</p>
      </div>
    </div>
  </div>
);

const App = () => (
  <div className="relative flex h-screen w-full overflow-hidden rounded-t-md border-t border-[#5d7355] bg-linear-to-r from-[#b5dca6] via-[#cdeabf] to-[#c0e3b2] font-['Open_Sans','Noto_Sans_CJK_SC',sans-serif] text-black">
    <div className="w-[6px] shrink-0 border-x border-[#6f8468] bg-[linear-gradient(to_bottom,#b9dcab,#b9dcab_15%,#5d8dab_19%,#b9dcab_23%,#d2c65a_29%,#55bfae_32%,#a8cf9a_40%,#b9dcab_58%,#4f84b0_62%,#c4e3b8_66%,#58b4ae_73%,#b9dcab_79%,#3f86c8_86%,#b9dcab_92%)]" />
    <div className="-mt-px flex min-w-0 grow flex-col">
      <Header />
      <Toolbars />
      <Workspace />
      <CommandWindow />
      <StatusBar />
      <div className="h-[5px] shrink-0 border-b border-[#6f8468]" />
    </div>
    <div className="w-[6px] shrink-0 border-x border-[#7d9475]" />
    <Watermark />
  </div>
);

export default App;
